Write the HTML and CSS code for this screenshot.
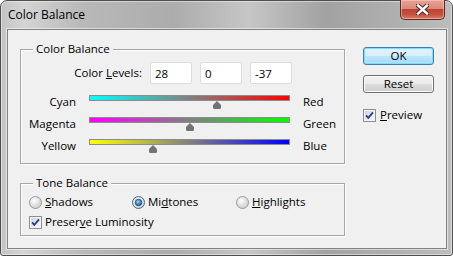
FILE: index.html
```html
<!DOCTYPE html>
<html>
<head>
<meta charset="utf-8">
<title>Color Balance</title>
<link rel="stylesheet" href="styles.css">
</head>
<body>
<div class="window">
  <div class="titlebar">
    <span class="title">Color Balance</span>
    <button class="close" aria-label="Close">
      <svg width="13" height="11" viewBox="0 0 13 11">
        <path d="M2 1.5 L11 9.5 M11 1.5 L2 9.5" stroke="#4a2a26" stroke-width="4.4" stroke-linecap="square"/>
        <path d="M2 1.5 L11 9.5 M11 1.5 L2 9.5" stroke="#ffffff" stroke-width="2.4" stroke-linecap="square"/>
      </svg>
    </button>
  </div>
  <div class="client">
    <div class="main">
      <fieldset class="group g1">
        <legend>Color Balance</legend>
        <div class="levels">
          <label class="levels-label">Color <u>L</u>evels:</label>
          <input class="field" value="28">
          <input class="field" value="0">
          <input class="field" value="-37">
        </div>
        <div class="slider-row">
          <span class="lbl-left">Cyan</span>
          <div class="track cr">
            <svg class="thumb" style="left:64%" width="9" height="8" viewBox="0 0 9 8"><path d="M4.5 0 L8.5 4 V6.5 Q8.5 8 7 8 H2 Q0.5 8 0.5 6.5 V4 Z" fill="#737373"/></svg>
          </div>
          <span class="lbl-right">Red</span>
        </div>
        <div class="slider-row">
          <span class="lbl-left">Magenta</span>
          <div class="track mg">
            <svg class="thumb" style="left:50%" width="9" height="8" viewBox="0 0 9 8"><path d="M4.5 0 L8.5 4 V6.5 Q8.5 8 7 8 H2 Q0.5 8 0.5 6.5 V4 Z" fill="#737373"/></svg>
          </div>
          <span class="lbl-right">Green</span>
        </div>
        <div class="slider-row">
          <span class="lbl-left">Yellow</span>
          <div class="track yb">
            <svg class="thumb" style="left:31.5%" width="9" height="8" viewBox="0 0 9 8"><path d="M4.5 0 L8.5 4 V6.5 Q8.5 8 7 8 H2 Q0.5 8 0.5 6.5 V4 Z" fill="#737373"/></svg>
          </div>
          <span class="lbl-right">Blue</span>
        </div>
      </fieldset>
      <fieldset class="group g2">
        <legend>Tone Balance</legend>
        <div class="radios">
          <label class="opt">
            <svg class="radio" width="13" height="13" viewBox="0 0 13 13"><defs><radialGradient id="rg1" cx="0.4" cy="0.35" r="0.7"><stop offset="0" stop-color="#ffffff"/><stop offset="1" stop-color="#c9c9c9"/></radialGradient></defs><circle cx="6.5" cy="6.5" r="6" fill="url(#rg1)" stroke="#9a9a9a"/></svg>
            <span><u>S</u>hadows</span>
          </label>
          <label class="opt">
            <svg class="radio" width="13" height="13" viewBox="0 0 13 13"><defs><radialGradient id="rg2" cx="0.4" cy="0.35" r="0.7"><stop offset="0" stop-color="#ffffff"/><stop offset="1" stop-color="#c9c9c9"/></radialGradient><radialGradient id="rd" cx="0.4" cy="0.35" r="0.7"><stop offset="0" stop-color="#8fd3ff"/><stop offset="1" stop-color="#0b5ea8"/></radialGradient></defs><circle cx="6.5" cy="6.5" r="6" fill="url(#rg2)" stroke="#4d6a8a"/><circle cx="6.5" cy="6.5" r="3.2" fill="url(#rd)" stroke="#1b3f66" stroke-width="0.8"/></svg>
            <span>Mi<u>d</u>tones</span>
          </label>
          <label class="opt">
            <svg class="radio" width="13" height="13" viewBox="0 0 13 13"><defs><radialGradient id="rg3" cx="0.4" cy="0.35" r="0.7"><stop offset="0" stop-color="#ffffff"/><stop offset="1" stop-color="#c9c9c9"/></radialGradient></defs><circle cx="6.5" cy="6.5" r="6" fill="url(#rg3)" stroke="#9a9a9a"/></svg>
            <span><u>H</u>ighlights</span>
          </label>
        </div>
        <label class="check-row">
          <svg class="checkbox" width="13" height="13" viewBox="0 0 13 13"><defs><linearGradient id="cb1" x1="0" y1="0" x2="1" y2="1"><stop offset="0" stop-color="#cfd6df"/><stop offset="1" stop-color="#f7f7f7"/></linearGradient></defs><rect x="0.5" y="0.5" width="12" height="12" fill="#f4f4f4" stroke="#8e8f8f"/><rect x="2" y="2" width="9" height="9" fill="url(#cb1)"/><path d="M3 6.3 L5.3 8.8 L10 3.3" fill="none" stroke="#2b3d86" stroke-width="1.8"/></svg>
          <span>Preser<u>v</u>e Luminosity</span>
        </label>
      </fieldset>
    </div>
    <div class="side">
      <button class="btn btn-default">OK</button>
      <button class="btn">Reset</button>
      <label class="check-row preview">
        <svg class="checkbox" width="13" height="13" viewBox="0 0 13 13"><defs><linearGradient id="cb2" x1="0" y1="0" x2="1" y2="1"><stop offset="0" stop-color="#cfd6df"/><stop offset="1" stop-color="#f7f7f7"/></linearGradient></defs><rect x="0.5" y="0.5" width="12" height="12" fill="#f4f4f4" stroke="#8e8f8f"/><rect x="2" y="2" width="9" height="9" fill="url(#cb2)"/><path d="M3 6.3 L5.3 8.8 L10 3.3" fill="none" stroke="#2b3d86" stroke-width="1.8"/></svg>
        <span><u>P</u>review</span>
      </label>
    </div>
  </div>
</div>
</body>
</html>
```

FILE: styles.css
```css
* { box-sizing: border-box; }
html, body { margin: 0; padding: 0; }
body {
  width: 453px;
  height: 256px;
  overflow: hidden;
  background: #ffffff;
  font-family: "Open Sans", "Noto Sans", sans-serif;
  font-size: 11.5px;
  color: #000;
}
u { text-decoration: underline; text-underline-offset: 1px; }

.window {
  width: 453px;
  height: 256px;
  border: 1px solid #4f4f4f;
  border-radius: 7px 7px 3px 3px;
  background: linear-gradient(90deg, #c4c4c4 0%, #d4d4d4 5%, #b9b9b9 18%, #acacac 38%, #c6c6c6 55%, #a2a2a2 72%, #b0b0b0 88%, #bdbdbd 100%);
  box-shadow: inset 0 0 0 1px rgba(255,255,255,0.45);
  padding: 0 5px 6px 6px;
  display: flex;
  flex-direction: column;
}

.titlebar {
  height: 28px;
  display: flex;
  align-items: flex-start;
  flex: none;
}
.title {
  margin: 6px 0 0 1px;
  line-height: 16px;
  font-size: 12px;
}
.close {
  margin: -1px 2px 0 auto;
  width: 45px;
  height: 20px;
  padding: 0;
  border: 1px solid #5c2a22;
  border-top: none;
  border-radius: 0 0 5px 5px;
  background: linear-gradient(180deg, #e7a494 0%, #d98a79 45%, #c2432e 50%, #c4503c 75%, #d97c66 100%);
  box-shadow: inset 0 0 0 1px rgba(255,210,200,0.5);
  display: flex;
  align-items: center;
  justify-content: center;
}
.close svg { display: block; }

.client {
  flex: none;
  height: 220px;
  border: 1px solid #828282;
  box-shadow: 0 0 0 1px rgba(255,255,255,0.5);
  background: #f0f0f0;
  display: flex;
  align-items: flex-start;
}

.main {
  width: 325px;
  margin-left: 12px;
  display: flex;
  flex-direction: column;
}

.group {
  margin: 0;
  padding: 0;
  min-width: 0;
  border: 1px solid #a6a6a6;
  box-shadow: inset 1px 1px 0 #ffffff, 1px 1px 0 #ffffff;
}
.group legend {
  margin-left: 12px;
  padding: 0 3px;
  line-height: 16px;
  background: #f0f0f0;
}
.g1 { margin-top: 11px; padding-bottom: 5px; }
.g2 { margin-top: 11px; padding-bottom: 5px; }

.levels {
  display: flex;
  align-items: center;
  gap: 8px;
  margin-top: 5px;
  height: 22px;
}
.levels-label {
  width: 121px;
  text-align: right;
  line-height: 16px;
}
.field {
  width: 42px;
  height: 22px;
  border: 1px solid #dcdcdc;
  border-radius: 2px;
  background: #fff;
  padding: 0 4px;
  font: inherit;
  color: #000;
}

.slider-row {
  display: grid;
  grid-template-columns: 55px 201px auto;
  column-gap: 13px;
  height: 22px;
  align-items: start;
}
.levels + .slider-row { margin-top: 8px; }
.lbl-left { text-align: right; line-height: 17px; padding-top: 1px; }
.lbl-right { line-height: 17px; padding-top: 1px; }

.track {
  position: relative;
  height: 6px;
  margin-top: 3px;
  border: 1px solid #8c8c8c;
}
.cr { background: linear-gradient(90deg, #00ffff, #808080 50%, #ff0000); }
.mg { background: linear-gradient(90deg, #ff00ff, #808080 50%, #00ff00); }
.yb { background: linear-gradient(90deg, #ffff00, #808080 50%, #0000ff); }
.thumb {
  position: absolute;
  top: calc(100% + 1px);
  transform: translateX(-50%);
  display: block;
}

.radios {
  display: grid;
  grid-template-columns: 103px 104px auto;
  margin-top: 3px;
  padding-left: 8px;
  height: 16px;
}
.opt, .check-row {
  display: flex;
  align-items: center;
  gap: 3px;
  line-height: 16px;
}
.radio, .checkbox { display: block; flex: none; }
.check-row { margin-top: 4px; padding-left: 8px; }

.side {
  margin-left: 18px;
  padding-top: 17px;
  width: 71px;
  display: flex;
  flex-direction: column;
}
.btn {
  width: 71px;
  height: 18px;
  padding: 0;
  font: inherit;
  color: #000;
  line-height: 14px;
  border: 1px solid #707070;
  border-radius: 3px;
  background: linear-gradient(180deg, #f2f2f2 0%, #ebebeb 48%, #dddddd 52%, #cfcfcf 100%);
  box-shadow: inset 0 0 0 1px #fcfcfc;
}
.btn + .btn { margin-top: 10px; }
.btn-default {
  border-color: #3c7fb1;
  background: linear-gradient(180deg, #e8f6fd 0%, #d5effc 48%, #bde6fd 52%, #a6d9f4 100%);
  box-shadow: inset 0 0 0 1px #7fdcff, inset 0 0 2px 1px #b6eaff;
}
.preview { margin-top: 14px; padding-left: 0; gap: 4px; }
```
